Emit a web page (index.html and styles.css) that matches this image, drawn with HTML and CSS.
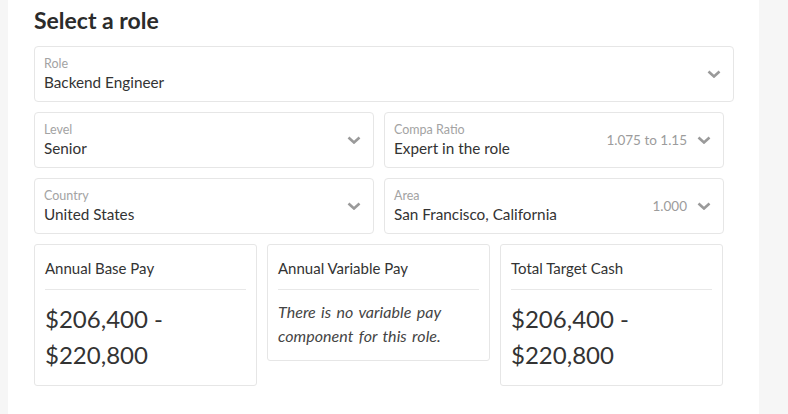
FILE: index.html
```html
<!DOCTYPE html>
<html>
<head>
<meta charset="utf-8">
<link rel="stylesheet" href="styles.css">
</head>
<body>
<div class="panel">
  <h1 class="title">Select a role</h1>
  <div class="field field-wide">
    <div class="field-text">
      <div class="field-label">Role</div>
      <div class="field-value">Backend Engineer</div>
    </div>
    <svg class="chev" width="14" height="8" viewBox="0 0 14 8"><path d="M1.5 1.5 L7 6.5 L12.5 1.5" fill="none" stroke="#9a9a9a" stroke-width="2.6"/></svg>
  </div>
  <div class="row">
    <div class="field">
      <div class="field-text">
        <div class="field-label">Level</div>
        <div class="field-value">Senior</div>
      </div>
      <svg class="chev" width="14" height="8" viewBox="0 0 14 8"><path d="M1.5 1.5 L7 6.5 L12.5 1.5" fill="none" stroke="#9a9a9a" stroke-width="2.6"/></svg>
    </div>
    <div class="field">
      <div class="field-text">
        <div class="field-label">Compa Ratio</div>
        <div class="field-value">Expert in the role</div>
      </div>
      <span class="field-meta">1.075 to 1.15</span>
      <svg class="chev" width="14" height="8" viewBox="0 0 14 8"><path d="M1.5 1.5 L7 6.5 L12.5 1.5" fill="none" stroke="#9a9a9a" stroke-width="2.6"/></svg>
    </div>
  </div>
  <div class="row">
    <div class="field">
      <div class="field-text">
        <div class="field-label">Country</div>
        <div class="field-value">United States</div>
      </div>
      <svg class="chev" width="14" height="8" viewBox="0 0 14 8"><path d="M1.5 1.5 L7 6.5 L12.5 1.5" fill="none" stroke="#9a9a9a" stroke-width="2.6"/></svg>
    </div>
    <div class="field">
      <div class="field-text">
        <div class="field-label">Area</div>
        <div class="field-value">San Francisco, California</div>
      </div>
      <span class="field-meta">1.000</span>
      <svg class="chev" width="14" height="8" viewBox="0 0 14 8"><path d="M1.5 1.5 L7 6.5 L12.5 1.5" fill="none" stroke="#9a9a9a" stroke-width="2.6"/></svg>
    </div>
  </div>
  <div class="cards">
    <div class="card">
      <div class="card-title">Annual Base Pay</div>
      <div class="card-amount">$206,400 -<br>$220,800</div>
    </div>
    <div class="card">
      <div class="card-title">Annual Variable Pay</div>
      <div class="card-note">There is no variable pay component for this role.</div>
    </div>
    <div class="card">
      <div class="card-title">Total Target Cash</div>
      <div class="card-amount">$206,400 -<br>$220,800</div>
    </div>
  </div>
</div>
</body>
</html>
```
FILE: styles.css
```css
html, body {
  margin: 0;
  padding: 0;
}
body {
  background: #f6f6f6;
  font-family: "Lato", "Open Sans", sans-serif;
  color: #333;
}
.panel {
  margin-left: 8px;
  width: 751px;
  min-height: 414px;
  background: #fff;
  box-sizing: border-box;
  padding: 0 26px;
}
.title {
  margin: 0;
  padding-top: 5px;
  font-size: 23px;
  line-height: 30px;
  font-weight: 700;
  color: #2b2b2b;
  height: 41px;
}
.field {
  display: flex;
  align-items: center;
  box-sizing: border-box;
  height: 56px;
  border: 1px solid #e6e6e6;
  border-radius: 4px;
  padding: 0 12px 0 9px;
  background: #fff;
}
.field-wide {
  width: 700px;
}
.field-text {
  flex: 1;
  min-width: 0;
}
.field-label {
  font-size: 12.5px;
  line-height: 16px;
  color: #a3a3a3;
}
.field-value {
  font-size: 15.3px;
  line-height: 20px;
  color: #333;
}
.field-meta {
  font-size: 13.5px;
  color: #9c9c9c;
  margin-right: 10px;
}
.chev {
  display: block;
}
.row {
  display: grid;
  grid-template-columns: 340px 340px;
  column-gap: 10px;
  margin-top: 10px;
}
.cards {
  display: grid;
  grid-template-columns: 223px 223px 223px;
  column-gap: 10px;
  align-items: start;
  margin-top: 10px;
}
.card {
  box-sizing: border-box;
  border: 1px solid #e6e6e6;
  border-radius: 3px;
  padding: 10px 10px 12px;
}
.card-title {
  font-size: 15px;
  line-height: 26px;
  color: #333;
  padding-bottom: 8px;
  border-bottom: 1px solid #e8e8e8;
}
.card-amount {
  font-size: 24px;
  line-height: 36px;
  color: #333;
  padding-top: 11px;
}
.card-note {
  font-family: "Lato", sans-serif;
  font-size: 16px;
  letter-spacing: 0.05px;
  word-spacing: 1.5px;
  line-height: 24px;
  font-style: italic;
  color: #444;
  padding-top: 10px;
}
```
